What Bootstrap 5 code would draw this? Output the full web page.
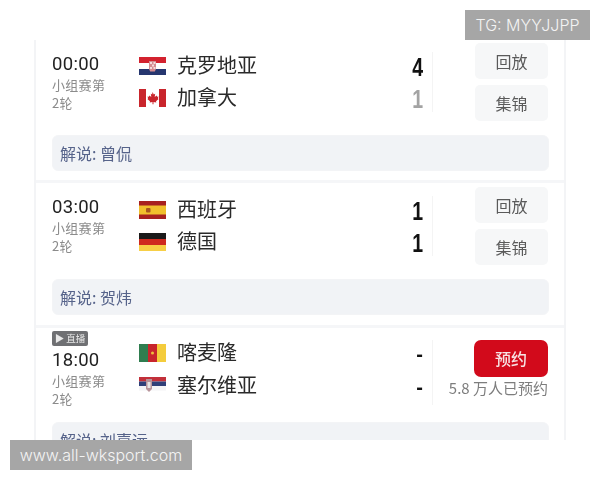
<!DOCTYPE html>
<html lang="zh">
<head>
<meta charset="utf-8">
<title>赛程</title>
<link rel="stylesheet" href="https://cdn.jsdelivr.net/npm/bootstrap@5.3.0/dist/css/bootstrap.min.css">
<style>
html,body{width:600px;height:480px;overflow:hidden;background:#fff}
body{font-family:"Noto Sans CJK SC","Liberation Sans",sans-serif;position:relative}
.sheet{width:532px;height:400px;margin:40px 0 0 34px;border-left:2px solid #f3f4f6;border-right:2px solid #f3f4f6;overflow:hidden;filter:blur(.35px)}
.fixture{padding:3px 16px 12px 16px;border-bottom:3px solid #f5f6f8;height:143px}
.fixture.second{height:145px;padding-top:4px}
.fixture.third{border-bottom:0;padding-top:3px;height:auto}
.upper{height:78px}
.third .upper{height:91px}
.clock{width:87px;padding-top:9px}
.second .clock{padding-top:8px}
.third .clock{padding-top:0}
.clock-time{font-family:Roboto,"Liberation Sans",sans-serif;font-size:18.5px;line-height:24px;color:#222;letter-spacing:.3px}
.clock-sub{font-size:13px;line-height:17.5px;color:#8b8b8b;letter-spacing:.3px}
.replay-tag{width:36px;height:15px;border-radius:2px;background:#6f7073;color:#e9e9e9;font-size:9.5px;line-height:15px;text-align:center;margin-bottom:2px}
.lineup{width:254px;padding-top:10px;gap:8px}
.third .lineup{padding-top:9px;gap:9px}
.side{height:24px;gap:11px;font-size:20px;line-height:24px;color:#2a2a2a}
.side svg{flex:none;width:27px;height:18px;margin-top:2px}
.goals{width:39px;padding-top:12px;gap:8px;text-align:right;padding-right:9px}
.third .goals{padding-top:11px;gap:9px}
.goal{height:24px;font-family:"Liberation Sans",sans-serif;font-weight:700;font-size:25px;line-height:24px;color:#111;transform:scaleX(.78);transform-origin:right center}
.goal.loser{color:#a3a3a3}
.third .goal{font-size:20px;transform:none}
.actions{flex:1;border-left:1px solid #f4f4f4;display:flex;flex-direction:column;align-items:flex-end;gap:6px}
.fixture:not(.third) .actions{margin-top:9px;height:60px}
.third .actions{margin-top:9px;height:65px}
.act{display:block;width:73px;height:36px;flex:none;padding:0;border:0;border-radius:5px;background:#f6f7f8;color:#5a5a5a;font-size:16px;line-height:33px;text-align:center}
.fixture:not(.third) .act:first-child{margin-top:-9px}
.act.book{width:74px;background:#d20a1b;color:#f7e3e4;border-radius:7px;height:37px;line-height:37px;font-weight:500}
.booked{font-size:15px;line-height:18px;color:#7d7d7d;white-space:nowrap;margin-top:-4px}
.caster{height:36px;margin:14px -1px 0 0;padding:0 7px;border-radius:6px;background:#f1f3f6;border:1px solid #f3f4f6;color:#56638a;font-size:16px;line-height:34px}
.third .caster{margin-top:0}
.stamp{position:absolute;background:#a6a6a6;color:#f4f4f4;font-family:Inter,"Liberation Sans",sans-serif;font-weight:300;white-space:nowrap;text-align:center}
.stamp-top{left:465px;top:10px;width:125px;height:30px;font-size:16px;line-height:30px}
.stamp-bottom{left:10px;top:440px;width:182px;height:30px;font-size:16px;line-height:30px}
</style>
</head>
<body>
<main class="sheet">

<section class="fixture">
  <div class="upper d-flex">
    <div class="clock">
      <div class="clock-time">00:00</div>
      <div class="clock-sub">小组赛第<br>2轮</div>
    </div>
    <div class="lineup d-flex flex-column">
      <div class="side d-flex align-items-center">
        <svg viewBox="0 0 27 18"><rect width="27" height="6" fill="#d3222f"/><rect y="6" width="27" height="6" fill="#fff"/><rect y="12" width="27" height="6" fill="#26366f"/><path d="M10 4h7v8l-1.200 2.500h-4.600L10 12z" fill="#d58b92"/><path d="M11 5h2v2h-2zM14.500 5h2v2h-2zM13 7.500h2v2h-2zM11 10h2v2h-2zM14.500 10h2v2h-2z" fill="#fff" opacity=".7"/></svg>
        <span>克罗地亚</span>
      </div>
      <div class="side d-flex align-items-center">
        <svg viewBox="0 0 27 18"><rect width="27" height="18" fill="#fff"/><rect width="7" height="18" fill="#c9252c"/><rect x="20" width="7" height="18" fill="#c9252c"/><path d="M13.500 3l1.300 2.400 1.400-.6-.5 3.200 1.900-1.600.5 1.300 1.400-.2-.6 2 .8.600-2.700 2.200.3 1.200-2.800-.4v2.200h-1v-2.200l-2.800.4.3-1.200-2.700-2.200.8-.6-.6-2 1.400.2.5-1.300 1.900 1.600-.5-3.200 1.400.6z" fill="#c9252c"/></svg>
        <span>加拿大</span>
      </div>
    </div>
    <div class="goals d-flex flex-column"><div class="goal">4</div><div class="goal loser">1</div></div>
    <div class="actions"><button class="act" type="button">回放</button><button class="act" type="button">集锦</button></div>
  </div>
  <div class="caster">解说: 曾侃</div>
</section>

<section class="fixture second">
  <div class="upper d-flex">
    <div class="clock">
      <div class="clock-time">03:00</div>
      <div class="clock-sub">小组赛第<br>2轮</div>
    </div>
    <div class="lineup d-flex flex-column">
      <div class="side d-flex align-items-center">
        <svg viewBox="0 0 27 18"><rect width="27" height="18" fill="#f1bf2c"/><rect width="27" height="4.500" fill="#a8201f"/><rect y="13.500" width="27" height="4.500" fill="#a8201f"/><rect x="7" y="7" width="4.500" height="4.500" rx="1" fill="#a8551f"/></svg>
        <span>西班牙</span>
      </div>
      <div class="side d-flex align-items-center">
        <svg viewBox="0 0 27 18"><rect width="27" height="6" fill="#1a1a1a"/><rect y="6" width="27" height="6" fill="#cf2a1f"/><rect y="12" width="27" height="6" fill="#f7cf46"/></svg>
        <span>德国</span>
      </div>
    </div>
    <div class="goals d-flex flex-column"><div class="goal">1</div><div class="goal">1</div></div>
    <div class="actions"><button class="act" type="button">回放</button><button class="act" type="button">集锦</button></div>
  </div>
  <div class="caster">解说: 贺炜</div>
</section>

<section class="fixture third">
  <div class="upper d-flex">
    <div class="clock">
      <div class="replay-tag">▶ 直播</div>
      <div class="clock-time">18:00</div>
      <div class="clock-sub">小组赛第<br>2轮</div>
    </div>
    <div class="lineup d-flex flex-column">
      <div class="side d-flex align-items-center">
        <svg viewBox="0 0 27 18"><rect width="9" height="18" fill="#2f7d4f"/><rect x="9" width="9" height="18" fill="#c8252c"/><rect x="18" width="9" height="18" fill="#f4cc3c"/><circle cx="13.500" cy="9" r="1.500" fill="#eec23c"/></svg>
        <span>喀麦隆</span>
      </div>
      <div class="side d-flex align-items-center">
        <svg viewBox="0 0 27 18"><rect y="0" width="27" height="4.500" fill="#c2303a"/><rect y="4.500" width="27" height="4.500" fill="#2f3f78"/><rect y="9" width="27" height="4.500" fill="#f4f4f6"/><path d="M7 2h6v10l-3 3-3-3z" fill="#b7949a"/><rect x="8.500" y="5" width="3" height="6" fill="#e8e4e4"/></svg>
        <span>塞尔维亚</span>
      </div>
    </div>
    <div class="goals d-flex flex-column"><div class="goal">-</div><div class="goal">-</div></div>
    <div class="actions"><button class="act book" type="button">预约</button><div class="booked">5.8 万人已预约</div></div>
  </div>
  <div class="caster">解说: 刘嘉远</div>
</section>

</main>
<div class="stamp stamp-top">TG: MYYJJPP</div>
<div class="stamp stamp-bottom">www.all-wksport.com</div>
<script src="https://cdn.jsdelivr.net/npm/bootstrap@5.3.0/dist/js/bootstrap.bundle.min.js"></script>
</body>
</html>
